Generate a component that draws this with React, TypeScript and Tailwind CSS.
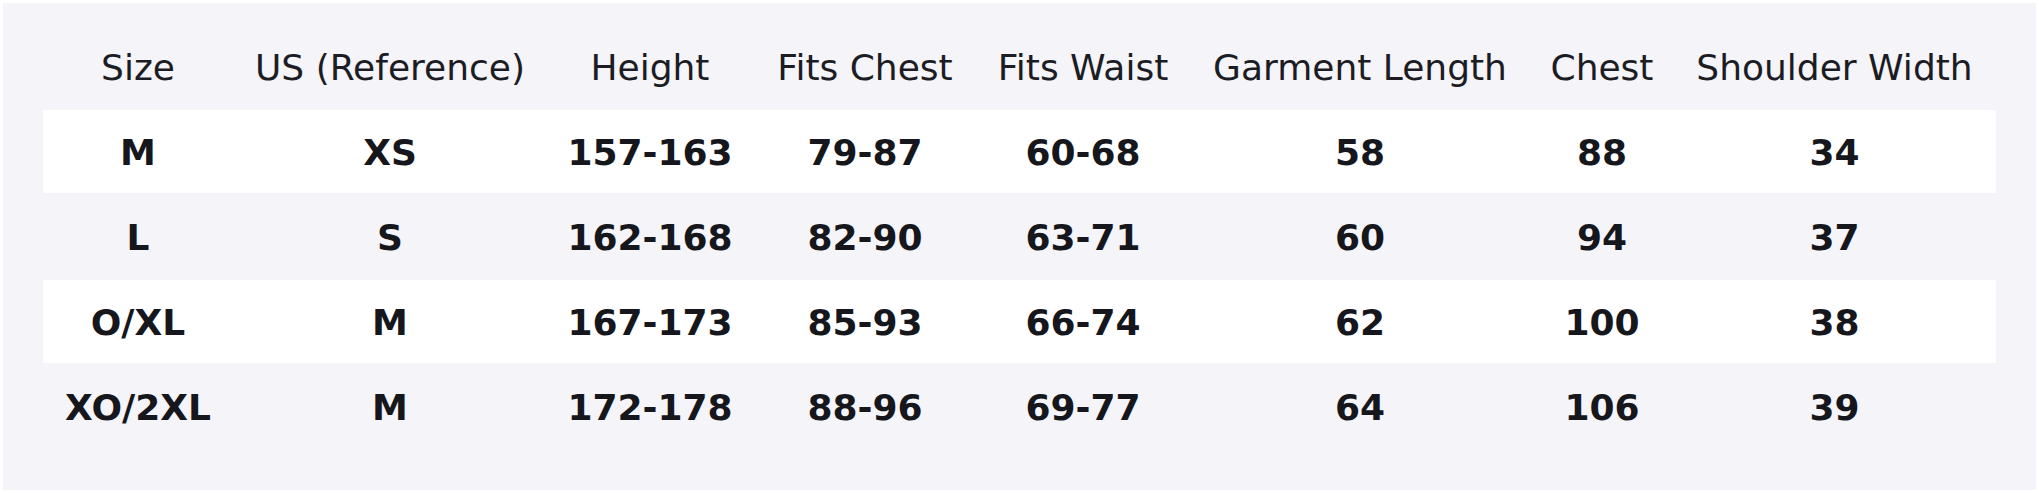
const headers = [
  'Size',
  'US (Reference)',
  'Height',
  'Fits Chest',
  'Fits Waist',
  'Garment Length',
  'Chest',
  'Shoulder Width',
]

const rows = [
  ['M', 'XS', '157-163', '79-87', '60-68', '58', '88', '34'],
  ['L', 'S', '162-168', '82-90', '63-71', '60', '94', '37'],
  ['O/XL', 'M', '167-173', '85-93', '66-74', '62', '100', '38'],
  ['XO/2XL', 'M', '172-178', '88-96', '69-77', '64', '106', '39'],
]

const cols = 'grid grid-cols-[190px_314px_206px_224px_212px_342px_142px_323px]'

export default function App() {
  return (
    <div className="min-h-screen bg-white p-[3px] font-['DejaVu_Sans',sans-serif] text-[#16161d]">
      <div className="bg-[#f4f4f9] px-[40px] pt-[22px] pb-[42px]">
        <div className="flex flex-col gap-[2px]">
          <div className={`${cols} h-[83px] items-center text-center text-[36px] leading-[44px] text-[#1c1c24]`}>
            {headers.map((h) => (
              <div key={h} className="whitespace-nowrap pt-[2px]">{h}</div>
            ))}
          </div>
          {rows.map((r, i) => (
            <div
              key={r[0]}
              className={`${cols} h-[83px] items-center text-center text-[36px] leading-[44px] font-bold ${
                i % 2 === 0 ? 'bg-white' : 'bg-transparent'
              }`}
            >
              {r.map((c, j) => (
                <div key={j} className="whitespace-nowrap pt-[2px]">{c}</div>
              ))}
            </div>
          ))}
        </div>
      </div>
    </div>
  )
}
